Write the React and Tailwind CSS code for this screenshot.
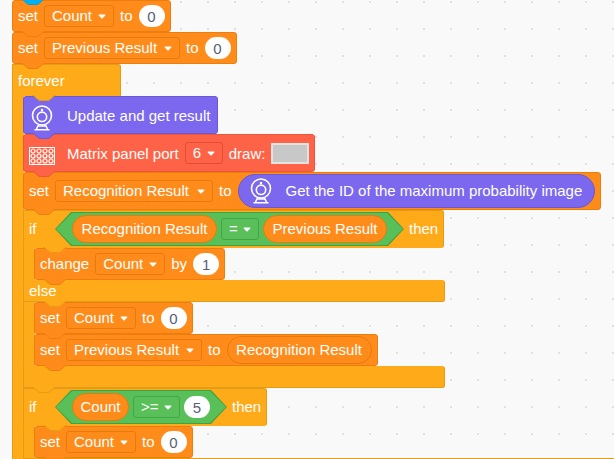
import React from "react";

const TONES = {
  data: { block: "bg-[#ff8c1a] border-[#ec7d0f]", fill: "#ff8c1a", line: "#ec7d0f" },
  control: { fill: "#ffab19", line: "#e39c16" },
  camera: { block: "bg-[#7b68ee] border-[#6a59d2]", fill: "#7b68ee", line: "#6a59d2" },
  matrix: { block: "bg-[#ff6347] border-[#e8563b]", fill: "#ff6347", line: "#e8563b" },
  event: { fill: "#00b0f4", line: "#0c9bd0" },
};

function Tab({ tone }) {
  const { fill, line } = TONES[tone];
  return (
    <svg className="pointer-events-none absolute top-full left-2 z-10" width="24" height="7" viewBox="0 0 24 7" aria-hidden="true">
      <path d="M0 0H24V.5C22.3 .6 21.8 1 21 1.8L18.3 4.2C17.5 5 16.9 5.5 15.6 5.5H8.4C7.1 5.5 6.5 5 5.7 4.2L3 1.8C2.2 1 1.7 .6 0 .5Z" fill={fill} />
      <path d="M0 .5C1.7 .6 2.2 1 3 1.8L5.7 4.2C6.5 5 7.1 5.5 8.4 5.5H15.6C16.9 5.5 17.5 5 18.3 4.2L21 1.8C21.8 1 22.3 .6 24 .5" fill="none" stroke={line} />
    </svg>
  );
}

function Block({ tone, tall, children }) {
  return (
    <div className={`relative flex w-fit items-center gap-1.5 rounded-[3px] border px-[5px] ${tall ? "h-[38px]" : "h-8"} ${TONES[tone].block}`}>
      {children}
      <Tab tone={tone} />
    </div>
  );
}

function Menu({ label, value, size, green, red }) {
  const edge = green ? "border-[#43a543]" : red ? "border-[#e04e34]" : "border-[#e67a0c]";
  return (
    <span className={`relative block h-[22px] shrink-0 ${size}`}>
      <select aria-label={label} defaultValue={value} className={`block h-full w-full appearance-none rounded-[3px] border bg-transparent pl-[7px] text-white outline-none ${edge}`}>
        <option>{value}</option>
      </select>
      <svg className="pointer-events-none absolute top-[9px] right-2" width="8" height="5" viewBox="0 0 8 5" aria-hidden="true">
        <path d="M1.2 .5H6.8Q7.8 .7 7.2 1.5L4.6 4.2Q4 4.8 3.4 4.2L.8 1.5Q.2 .7 1.2 .5Z" fill="#fff" />
      </svg>
    </span>
  );
}

function Num({ label, value }) {
  return <input aria-label={label} defaultValue={value} className="h-[22px] w-[26px] shrink-0 rounded-full bg-white text-center text-[#575e75] outline-none" />;
}

function Variable({ children, size }) {
  return <span className={`flex h-7 items-center justify-center rounded-full border border-[#e67a0c] bg-[#ff8c1a] ${size}`}>{children}</span>;
}

function Hexagon({ children }) {
  return (
    <div className="bg-[#42a142] p-px [clip-path:polygon(16px_0,calc(100%_-_16px)_0,100%_50%,calc(100%_-_16px)_100%,16px_100%,0_50%)]">
      <div className="flex h-8 items-center gap-1 bg-[#59c059] px-4 [clip-path:polygon(16px_0,calc(100%_-_16px)_0,100%_50%,calc(100%_-_16px)_100%,16px_100%,0_50%)]">
        {children}
      </div>
    </div>
  );
}

function Camera() {
  return (
    <svg className="shrink-0" width="22" height="26" viewBox="0 0 22 26" fill="none" stroke="#fff" strokeWidth="1.6" aria-hidden="true">
      <circle cx="11" cy="10.5" r="9.5" />
      <circle cx="11" cy="11.8" r="4.7" />
      <circle cx="11" cy="5" r="1.2" fill="#fff" stroke="none" />
      <path d="M7.5 20L5.5 24M14.5 20L16.5 24M3.5 24.8H18.5M7 21H15" />
    </svg>
  );
}

function MatrixIcon() {
  return (
    <svg className="shrink-0" width="26" height="18" viewBox="0 0 26 18" fill="none" stroke="#fff" aria-hidden="true">
      <rect x=".5" y=".5" width="25" height="17" />
      {[4, 10, 16, 22].map((x) => [4, 9, 14].map((y) => <circle key={`${x}-${y}`} cx={x} cy={y} r="2" strokeWidth="1.2" />))}
    </svg>
  );
}

function SetCount() {
  return (
    <Block tone="data">
      <span className="w-5">set</span>
      <Menu label="Variable" value="Count" size="w-[70px]" />
      <span>to</span>
      <Num label="Value" value="0" />
    </Block>
  );
}

function IfHeader({ children }) {
  return (
    <div className="flex h-[38px] w-fit items-center gap-[5px] rounded-r-[3px] border border-[#e39c16] border-b-[#ffab19] bg-[#ffab19] px-[5px]">
      <span className="w-[21px]">if</span>
      <Hexagon>{children}</Hexagon>
      <span>then</span>
    </div>
  );
}

function Body({ children }) {
  return (
    <div className="relative border-l border-[#e39c16] bg-[linear-gradient(to_right,#ffab19_11px,transparent_11px)] pl-2.5">
      {children}
      <div className="absolute -top-px left-[11px]">
        <Tab tone="control" />
      </div>
    </div>
  );
}

export default function App() {
  return (
    <main className="h-screen overflow-hidden bg-[#f9f9f9] bg-[radial-gradient(circle_at_1px_1px,#e0e0e0_1px,transparent_1px)] bg-[size:27px_27px] bg-[position:18px_1px] pl-3 font-['Liberation_Sans',Arial,sans-serif] text-[15px] leading-5 whitespace-nowrap text-white">
      <div className="relative">
        <SetCount />
        <div className="absolute -top-px left-px">
          <Tab tone="event" />
        </div>
      </div>
      <Block tone="data">
        <span className="w-5">set</span>
        <Menu label="Variable" value="Previous Result" size="w-[136px]" />
        <span>to</span>
        <Num label="Value" value="0" />
      </Block>

      <section>
        <div className="flex h-8 w-[109px] items-center rounded-tr-[3px] border border-[#e39c16] border-b-[#ffab19] bg-[#ffab19] px-[5px] pt-0.5">forever</div>
        <Body>
          <Block tone="camera" tall>
            <span className="flex w-8 pt-1.5 pl-0.5"><Camera /></span>
            <span className="pt-px pr-0.5">Update and get result</span>
          </Block>
          <Block tone="matrix" tall>
            <span className="flex w-8 pt-1.5"><MatrixIcon /></span>
            <span className="pt-px">Matrix panel port</span>
            <Menu label="Port" value="6" size="w-[38px]" red />
            <span className="pt-px">draw:</span>
            <button aria-label="Edit drawing" className="h-[21px] w-[38px] border-2 border-[#e3e3e3] bg-[#c8c8c8]" />
          </Block>
          <Block tone="data" tall>
            <span className="w-5">set</span>
            <Menu label="Variable" value="Recognition Result" size="w-[158px]" />
            <span>to</span>
            <span className="flex h-[34px] items-center gap-3.5 rounded-full border border-[#6a59d2] bg-[#7b68ee] pr-3 pl-[11px]">
              <Camera />
              <span>Get the ID of the maximum probability image</span>
            </span>
          </Block>

          <section>
            <IfHeader>
              <Variable size="w-[145px]">Recognition Result</Variable>
              <Menu label="Comparison" value="=" size="w-[38px]" green />
              <Variable size="w-[124px]">Previous Result</Variable>
            </IfHeader>
            <Body>
              <Block tone="data">
                <span>change</span>
                <Menu label="Variable" value="Count" size="w-[70px]" />
                <span>by</span>
                <Num label="Amount" value="1" />
              </Block>
            </Body>
            <div className="flex h-[22px] w-[422px] items-center rounded-r-[3px] border border-[#e39c16] border-t-[#ffab19] bg-[#ffab19] px-[5px]">else</div>
            <Body>
              <SetCount />
              <Block tone="data">
                <span className="w-5">set</span>
                <Menu label="Variable" value="Previous Result" size="w-[136px]" />
                <span>to</span>
                <Variable size="w-[145px]">Recognition Result</Variable>
              </Block>
            </Body>
            <div className="relative h-[22px] w-[422px] rounded-r-[3px] border border-[#e39c16] border-t-[#ffab19] bg-[#ffab19]">
              <Tab tone="control" />
            </div>
          </section>

          <section>
            <IfHeader>
              <Variable size="w-[57px]">Count</Variable>
              <Menu label="Comparison" value=">=" size="w-[47px]" green />
              <Num label="Threshold" value="5" />
            </IfHeader>
            <Body>
              <SetCount />
            </Body>
            <div className="h-[22px] border border-[#e39c16] bg-[#ffab19]" />
          </section>
        </Body>
      </section>
    </main>
  );
}
